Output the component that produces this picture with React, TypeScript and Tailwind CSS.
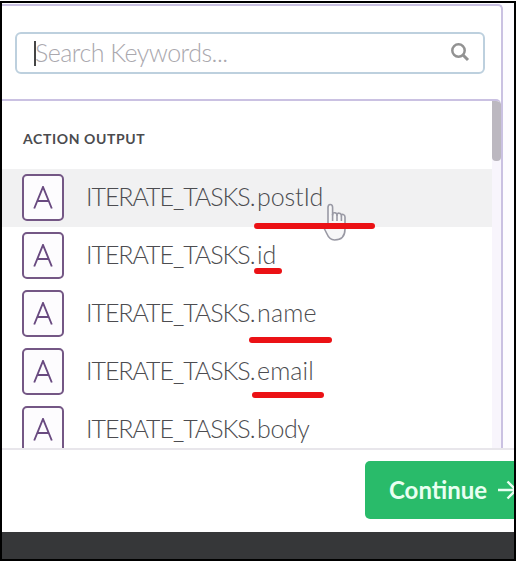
import React from 'react';

const sans = "font-[Lato,'Open_Sans',sans-serif]";

type Row = { name: string; nameClass: string; active?: boolean };

const rows: Row[] = [
  { name: 'postId', nameClass: 'tracking-[-0.1px]', active: true },
  { name: 'id', nameClass: 'tracking-[0px]' },
  { name: 'name', nameClass: 'tracking-[0.2px]' },
  { name: 'email', nameClass: 'tracking-[0.1px]' },
  { name: 'body', nameClass: 'tracking-[-0.4px]' },
];

function KeywordRow({ row }: { row: Row }) {
  return (
    <div className={`flex h-[58px] shrink-0 items-start pl-5 pt-[5px] ${row.active ? 'bg-[#f1f1f2]' : ''}`}>
      <div className="flex h-[47px] w-[42px] shrink-0 items-center justify-center rounded-[5px] border-2 border-[#745785] bg-[#fdfcfe]">
        <svg width="20" height="24" viewBox="0 0 20 24" fill="none" stroke="#694a80" strokeWidth="1.9">
          <path d="M1.2 22.500 10 1l8.800 21.500M4.600 15h10.800" />
        </svg>
      </div>
      <div className="ml-[22px] flex pt-[7px] text-[25px] leading-[30px] text-[#4c4c50]">
        <span className="w-[171px] shrink-0 whitespace-nowrap font-light tracking-[-1.05px]">ITERATE_TASKS.</span>
        <span className={`whitespace-nowrap font-light ${row.nameClass}`}>{row.name}</span>
      </div>
    </div>
  );
}

export default function App() {
  return (
    <div className={`relative h-[562px] w-[517px] overflow-hidden bg-white pt-px ${sans}`}>
      <div className="flex h-[560px] w-[516px] flex-col overflow-hidden border-2 border-black bg-[#fdfcff]">
        <div className="flex h-[445px] shrink-0 flex-col pt-px">
          <div className="flex min-h-0 w-[501px] flex-1 flex-col rounded-tr-[5px] border-r-2 border-t-2 border-[#cac1e2] bg-white">
            <div className="h-[93px] shrink-0 pl-[13px] pt-[26px]">
              <div className="flex h-[42px] w-[470px] items-center rounded-[6px] border-2 border-[#bdd0de] bg-white pl-[17px] pr-[13px]">
                <div className="h-[25px] w-[2px] bg-[#444]" />
                <span className="-ml-px -mt-[2px] text-[25px] font-light leading-[30px] tracking-[-0.53px] text-[#aaa8ae]">Search Keywords...</span>
                <svg className="-mt-[2px] ml-auto" width="20" height="20" viewBox="0 0 20 20" fill="none" stroke="#929292">
                  <circle cx="8.500" cy="8.500" r="6.200" strokeWidth="2.500" />
                  <path d="m13 13 5 5" strokeWidth="3" />
                </svg>
              </div>
            </div>
            <div className="flex min-h-0 flex-1 overflow-hidden rounded-tr-[5px] border-t-2 border-[#cac1e2]">
              <div className="flex min-w-0 flex-1 flex-col overflow-hidden">
                <div className="flex h-[68px] shrink-0 items-start pl-[21px] pt-[28px]">
                  <span className="text-[14px] font-bold leading-[20px] tracking-[0.62px] text-[#4b4b4e]">ACTION OUTPUT</span>
                </div>
                {rows.map((row) => (
                  <KeywordRow key={row.name} row={row} />
                ))}
              </div>
              <div className="w-[9px] shrink-0 bg-[#f8f5fc]">
                <div className="h-[60px] rounded-b-[4px] bg-[#bcb8c0]" />
              </div>
            </div>
          </div>
        </div>
        <div className="flex h-[84px] shrink-0 items-start justify-end overflow-hidden border-t-2 border-[#e8e6eb] bg-white pt-[11px]">
          <div className="flex h-[58px] w-[149px] shrink-0 items-center overflow-hidden rounded-l-[5px] bg-[#29bb6a] pl-[24px] text-[#e8fff1]">
            <span className="w-[99px] shrink-0 whitespace-nowrap text-[24px] font-bold leading-[30px]">Continue</span>
            <svg className="ml-[10px] shrink-0" width="20" height="22" viewBox="0 0 20 22" fill="none" stroke="currentColor" strokeWidth="2.4">
              <path d="M0 11h17M9.500 2.500 18 11l-8.500 8.500" />
            </svg>
          </div>
        </div>
        <div className="flex-1 bg-[#363739]" />
      </div>

      {/* Pointer and the red emphasis strokes lie over the list */}
      <svg className="absolute left-[320px] top-[202px]" width="26" height="40" viewBox="0 0 26 40" fill="#f7f7f8" stroke="#9999a4" strokeWidth="1.600" strokeLinejoin="round">
        <path d="M8 25V5.500q0-3 2.300-3t2.300 3V13q0-2.500 2.200-2.200t2.200 2.400q0-2.300 2.200-2t2.200 2.800q0-2 1.800-1.500t1.800 2.500V27q0 11-10.500 11-5 0-8-7l-3.500-7q0-2 2-1.500z" />
        <path d="M12.600 12v7M17 13v6M21.400 14v5" />
      </svg>
      <div className="absolute left-[254px] top-[223px] h-[6px] w-[121px] rounded-full bg-[#eb1115]" />
      <div className="absolute left-[254px] top-[268px] h-[6px] w-[28px] rounded-full bg-[#eb1115]" />
      <div className="absolute left-[249px] top-[337px] h-[6px] w-[83px] rounded-full bg-[#eb1115]" />
      <div className="absolute left-[252px] top-[392px] h-[6px] w-[72px] rounded-full bg-[#eb1115]" />
    </div>
  );
}
